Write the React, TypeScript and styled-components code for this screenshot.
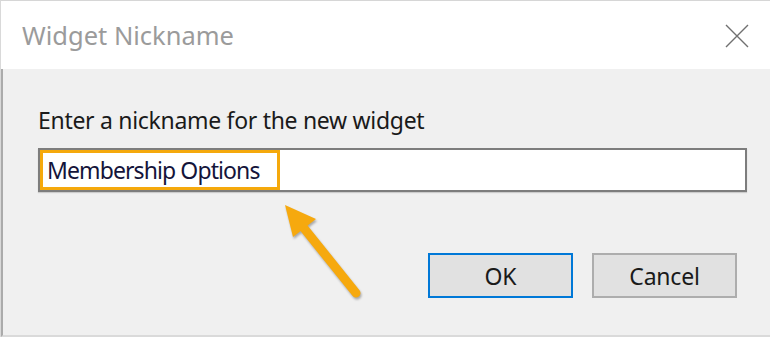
import React from 'react';
import styled, { createGlobalStyle } from 'styled-components';

const GlobalStyle = createGlobalStyle`
  html, body {
    margin: 0;
    padding: 0;
    background: #ffffff;
  }
  * {
    box-sizing: border-box;
  }
`;

const Window = styled.div`
  position: relative;
  width: 770px;
  height: 337px;
  display: flex;
  flex-direction: column;
  border-top: 1px solid #d6d6d6;
  border-left: 1px solid #d9d9d9;
  font-family: 'Noto Sans', 'Open Sans', sans-serif;
  overflow: hidden;
`;

const TitleBar = styled.div`
  height: 68px;
  flex: none;
  display: flex;
  align-items: center;
  justify-content: space-between;
  padding: 0 20px 0 21px;
  background: #ffffff;
`;

const Title = styled.span`
  font-size: 25.5px;
  color: #9b9b9b;
`;

const CloseButton = styled.button`
  width: 26px;
  height: 26px;
  padding: 0;
  border: none;
  background: transparent;
  display: flex;
  align-items: center;
  justify-content: center;
  margin-top: 1px;
`;

const Body = styled.div`
  flex: 1;
  display: flex;
  flex-direction: column;
  background: #f0f0f0;
  border-left: 2px solid #ababab;
  border-bottom: 2px solid #dadada;
  padding: 0 23px 0 35px;
`;

const Label = styled.label`
  margin-top: 37px;
  font-size: 23px;
  line-height: 28px;
  color: #1a1a1a;
  letter-spacing: -0.3px;
`;

const TextBox = styled.div`
  margin-top: 14px;
  height: 44px;
  display: flex;
  align-items: stretch;
  background: #ffffff;
  border: 2px solid #7d7d7d;
  box-shadow: 0 1px 1px rgba(0, 0, 0, 0.15);
`;

const Highlight = styled.span`
  display: flex;
  align-items: center;
  width: 240px;
  padding-left: 4px;
  border: 3px solid #f5a90c;
  font-size: 23px;
  color: #14143a;
  letter-spacing: -0.9px;
`;

const ButtonRow = styled.div`
  margin-top: 61px;
  margin-right: 10px;
  display: flex;
  justify-content: flex-end;
  gap: 19px;
`;

const DialogButton = styled.button<{ $primary?: boolean }>`
  width: 145px;
  height: 45px;
  padding: 0;
  background: #e1e1e1;
  border: 2px solid ${({ $primary }) => ($primary ? '#0078d7' : '#adadad')};
  font-family: 'Noto Sans', 'Open Sans', sans-serif;
  font-size: 23px;
  color: #1a1a1a;
  letter-spacing: -0.2px;
`;

const Arrow = styled.svg`
  position: absolute;
  left: 270px;
  top: 195px;
  filter: drop-shadow(1px 2px 1px rgba(0, 0, 0, 0.3));
`;

export default function App(): JSX.Element {
  return (
    <>
      <GlobalStyle />
      <Window>
        <TitleBar>
          <Title>Widget Nickname</Title>
          <CloseButton aria-label="Close">
            <svg width="24" height="24" viewBox="0 0 24 24">
              <path d="M1 1 L23 23 M23 1 L1 23" stroke="#707070" strokeWidth="1.4" fill="none" />
            </svg>
          </CloseButton>
        </TitleBar>
        <Body>
          <Label>Enter a nickname for the new widget</Label>
          <TextBox>
            <Highlight>Membership Options</Highlight>
          </TextBox>
          <ButtonRow>
            <DialogButton $primary>OK</DialogButton>
            <DialogButton>Cancel</DialogButton>
          </ButtonRow>
        </Body>
        {/* callout arrow pointing at the highlighted text */}
        <Arrow width="100" height="110" viewBox="0 0 100 110">
          <line x1="85" y1="97" x2="28" y2="26" stroke="#f6a90e" strokeWidth="9" strokeLinecap="round" />
          <polygon points="14,9 45,23 22,41" fill="#f6a90e" />
        </Arrow>
      </Window>
    </>
  );
}
